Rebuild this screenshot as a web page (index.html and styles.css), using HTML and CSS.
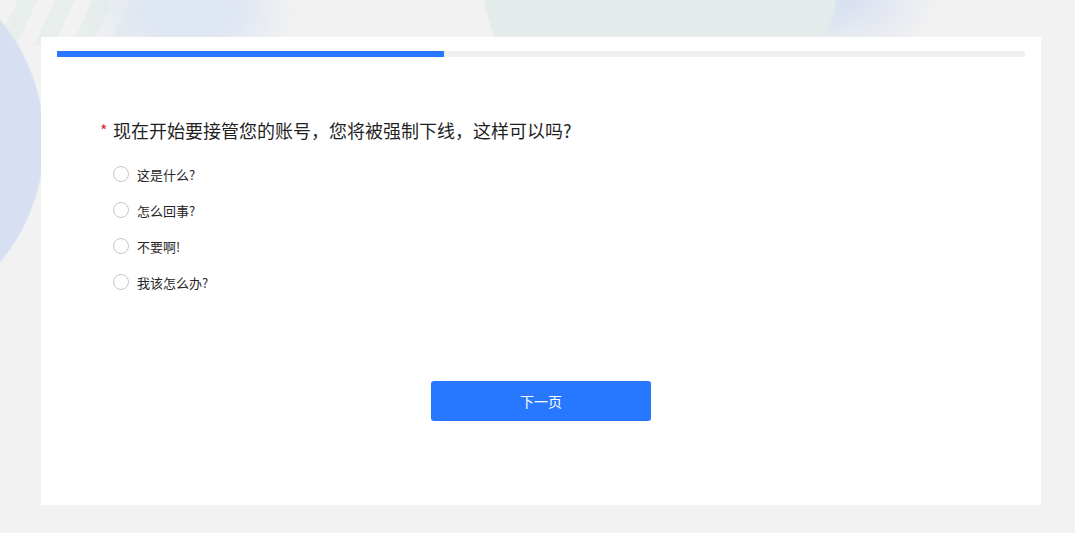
FILE: index.html
```html
<!DOCTYPE html>
<html lang="zh-CN">
<head>
<meta charset="utf-8">
<title>问卷</title>
<link rel="stylesheet" href="styles.css">
</head>
<body>
<main class="card">
  <div class="progress"><div class="progress-fill" style="width:40%"></div></div>
  <section class="question">
    <h2 class="q-title"><span class="req">*</span>现在开始要接管您的账号，您将被强制下线，这样可以吗?</h2>
    <ul class="options">
      <li class="option"><span class="radio"></span><span class="label">这是什么?</span></li>
      <li class="option"><span class="radio"></span><span class="label">怎么回事?</span></li>
      <li class="option"><span class="radio"></span><span class="label">不要啊!</span></li>
      <li class="option"><span class="radio"></span><span class="label">我该怎么办?</span></li>
    </ul>
  </section>
  <div class="actions"><button class="next-btn">下一页</button></div>
</main>
</body>
</html>
```
FILE: styles.css
```css
html, body { height: 100%; }
body {
  margin: 0;
  padding: 37px 34px 28px 41px;
  box-sizing: border-box;
  font-family: "Noto Sans CJK SC", "Noto Sans", sans-serif;
  background-color: #f2f2f2;
  background-image:
    radial-gradient(circle 190px at -145px 141px, #d6e0f2 99%, rgba(214,224,242,0) 100%),
    radial-gradient(circle 180px at 660px -32px, #e3ecea 99%, rgba(227,236,234,0) 100%),
    radial-gradient(ellipse 90px 60px at 850px 0px, rgba(214,222,240,0.9), rgba(226,230,242,0) 100%),
    radial-gradient(ellipse 60px 40px at 800px 10px, rgba(205,225,232,0.8), rgba(205,225,232,0) 100%),
    radial-gradient(ellipse 110px 70px at 190px 10px, rgba(222,230,243,0.95) 40%, rgba(222,230,243,0) 100%),
    repeating-linear-gradient(115deg, rgba(255,255,255,0) 0px, rgba(255,255,255,0) 16px, rgba(229,237,233,0.75) 16px, rgba(229,237,233,0.75) 34px),
    linear-gradient(#f2f2f2, #f2f2f2);
  background-size: auto, auto, auto, auto, auto, 200px 45px, auto;
  background-repeat: no-repeat;
  background-position: 0 0;
}
.card {
  width: 1000px;
  height: 468px;
  background: #fff;
  box-sizing: border-box;
  padding: 14px 16px 0 16px;
  display: flex;
  flex-direction: column;
}
.progress {
  height: 6px;
  background: #f0f0f0;
}
.progress-fill {
  height: 100%;
  background: #2878ff;
}
.question {
  padding: 61px 0 0 43px;
}
.q-title {
  margin: 0;
  font-size: 18px;
  line-height: 24px;
  font-weight: 400;
  color: #1f1f1f;
  display: flex;
  align-items: center;
}
.req {
  color: #e5252e;
  font-size: 16px;
  width: 13px;
}
.options {
  list-style: none;
  margin: 14px 0 0 13px;
  padding: 0;
}
.option {
  height: 36px;
  display: flex;
  align-items: center;
  gap: 8px;
}
.radio {
  width: 16px;
  height: 16px;
  box-sizing: border-box;
  border: 1px solid #c6c6c6;
  border-radius: 50%;
  background: #fff;
}
.label {
  font-size: 13px;
  color: #262626;
}
.actions {
  display: flex;
  justify-content: center;
  margin-top: 81px;
}
.next-btn {
  width: 220px;
  height: 40px;
  border: 0;
  border-radius: 3px;
  background: #2878ff;
  color: #fff;
  font-family: inherit;
  font-size: 14px;
  cursor: pointer;
}
```
